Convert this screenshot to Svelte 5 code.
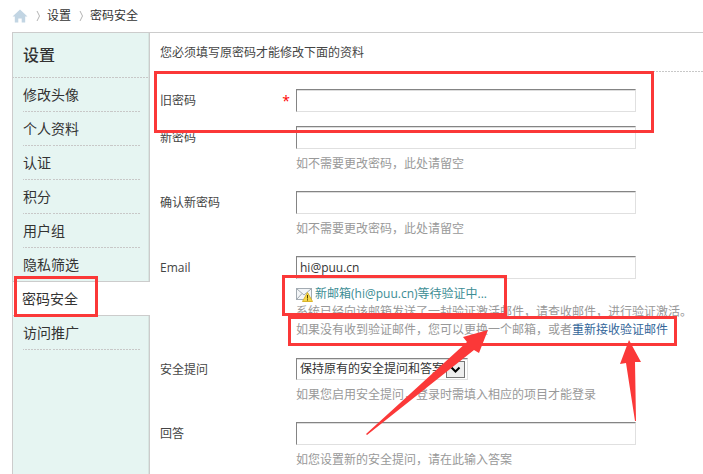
<script>
  const menu = [
    '修改头像',
    '个人资料',
    '认证',
    '积分',
    '用户组',
    '隐私筛选',
    '密码安全',
    '访问推广'
  ];

  let active = $state('密码安全');
  let email = $state('hi@puu.cn');
  let oldPassword = $state('');
  let newPassword = $state('');
  let newPassword2 = $state('');
  let answer = $state('');
  let question = $state('keep');
</script>

<div class="page">
  <nav class="crumbs">
    <a href="#home" aria-label="首页">
      <svg class="home" width="16" height="14" viewBox="0 0 16 14">
        <path d="M8 0.5 L15.5 7.5 H13.2 V13.5 H9.7 V9.5 H6.3 V13.5 H2.8 V7.5 H0.5 Z" fill="#c2d5e3" />
      </svg>
    </a>
    {@render chevron()}
    <a href="#settings">设置</a>
    {@render chevron()}
    <span>密码安全</span>
  </nav>

  <div class="body">
    <aside>
      <h2>设置</h2>
      <ul>
        {#each menu as item, i}
          <li class:active={item === active} class:before={menu[i + 1] === active}>
            <a href="#{item}" onclick={() => (active = item)}>{item}</a>
          </li>
        {/each}
      </ul>
    </aside>

    <main>
      <p class="intro">您必须填写原密码才能修改下面的资料</p>

      <form>
        <div class="row">
          <label for="old">旧密码 <span class="required">*</span></label>
          <div class="field">
            <input id="old" type="password" bind:value={oldPassword} />
          </div>
        </div>

        <div class="row">
          <label for="new">新密码</label>
          <div class="field">
            <input id="new" type="password" bind:value={newPassword} />
            <div class="hint">如不需要更改密码，此处请留空</div>
          </div>
        </div>

        <div class="row">
          <label for="new2">确认新密码</label>
          <div class="field">
            <input id="new2" type="password" bind:value={newPassword2} />
            <div class="hint">如不需要更改密码，此处请留空</div>
          </div>
        </div>

        <div class="row">
          <label for="email">Email</label>
          <div class="field">
            <input id="email" type="text" bind:value={email} />
            <div class="hint">
              <p class="pending">
                <svg width="17" height="15" viewBox="0 0 17 15">
                  <rect x="0.5" y="1.5" width="15" height="11" fill="#f4f6f8" stroke="#a3abb2" />
                  <path d="M1 2 L8 8 L15 2 M1 12 L6 6.5 M15 12 L10 6.5" fill="none" stroke="#a3abb2" />
                  <path d="M11.5 5.5 L16.5 14.5 H6.5 Z" fill="#f7d84a" stroke="#d9b52c" stroke-linejoin="round" />
                  <path d="M11.5 8 V11.5 M11.5 12.3 V13.5" stroke="#4a3b00" />
                </svg>
                新邮箱(hi@puu.cn)等待验证中...
              </p>
              <p>系统已经向该邮箱发送了一封验证激活邮件，请查收邮件，进行验证激活。</p>
              <p>如果没有收到验证邮件，您可以更换一个邮箱，或者<a href="#resend">重新接收验证邮件</a></p>
            </div>
          </div>
        </div>

        <div class="row">
          <label for="question">安全提问</label>
          <div class="field">
            <div class="select">
              <select id="question" bind:value={question}>
                <option value="keep">保持原有的安全提问和答案</option>
                <option value="none">无安全提问</option>
              </select>
              <span class="arrow">
                <svg width="11" height="8" viewBox="0 0 11 8">
                  <path d="M1.5 1.5 L5.5 5.5 L9.5 1.5" fill="none" stroke="#000" stroke-width="2" />
                </svg>
              </span>
            </div>
            <div class="hint">如果您启用安全提问，登录时需填入相应的项目才能登录</div>
          </div>
        </div>

        <div class="row">
          <label for="answer">回答</label>
          <div class="field">
            <input id="answer" type="text" bind:value={answer} />
            <div class="hint">如您设置新的安全提问，请在此输入答案</div>
          </div>
        </div>
      </form>
    </main>
  </div>

  <!-- red marks drawn over the page -->
  <svg class="marks" width="703" height="474" viewBox="0 0 703 474" aria-hidden="true">
    <g fill="none" stroke="#fb3838" stroke-width="3">
      <rect x="155.5" y="72.5" width="497" height="59" />
      <rect x="15.5" y="277.5" width="81" height="38" />
      <rect x="283.5" y="276.5" width="222" height="38" />
      <rect x="289.5" y="317.5" width="386" height="27" />
    </g>
    <g fill="#fb3838">
      <path d="M488 330 L463 337 L467 342 L366 434 L367 435 L474 350 L479 353 Z" />
      <path d="M629 340 L620 364 L626 363 L635 421 L636 421 L635 362 L641 362 Z" />
    </g>
  </svg>
</div>

{#snippet chevron()}
  <svg class="chevron" width="5" height="12" viewBox="0 0 5 12">
    <path d="M1 1 L3.5 6 L1 11" fill="none" stroke="#b4b4b4" />
  </svg>
{/snippet}

<style>
  :global(body) {
    margin: 0;
    background: #fff;
  }

  .page {
    position: relative;
    display: flex;
    flex-direction: column;
    min-height: 100vh;
    overflow: hidden;
    font: 12px/18px "Open Sans", "Noto Sans CJK SC", sans-serif;
    color: #444;
    --dashes: repeating-linear-gradient(90deg, #c8c8c8 0 2px, transparent 2px 3px) 1;
  }

  a {
    color: inherit;
    text-decoration: none;
  }

  p,
  h2,
  ul {
    margin: 0;
    padding: 0;
  }

  .crumbs {
    display: flex;
    align-items: center;
    height: 32px;
    padding-left: 12px;
    color: #333;
  }

  .crumbs svg {
    display: block;
  }

  .crumbs .chevron {
    margin: 0 6px 0 8px;
  }

  .body {
    flex: 1;
    display: flex;
    margin-left: 12px;
    border-top: 1px solid #ccc;
    border-left: 1px solid #ccc;
  }

  aside {
    flex: none;
    width: 137px;
    background: linear-gradient(to left, #ccc 1px, #d8e6e2 1px, #d8e6e2 2px, #e6f5f2 2px);
  }

  h2 {
    padding-left: 10px;
    border-bottom: 1px solid;
    border-image: var(--dashes);
    font-size: 16px;
    font-weight: 500;
    line-height: 44px;
    color: #333;
  }

  ul {
    list-style: none;
  }

  li {
    margin: 0 10px;
    border-bottom: 1px solid #ccc;
    border-image: var(--dashes);
    font-size: 14px;
    line-height: 33px;
    color: #333;
  }

  li a {
    display: block;
  }

  li.before {
    margin: 0;
    padding-left: 10px;
    border-image: none;
  }

  li.active {
    margin: 0;
    padding-left: 9px;
    background: #fff;
    border-image: none;
  }

  main {
    flex: 1;
    min-width: 0;
    padding-left: 10px;
  }

  .intro {
    height: 38px;
    border-bottom: 1px solid;
    border-image: var(--dashes);
    line-height: 40px;
  }

  form {
    padding-top: 17px;
  }

  .row {
    display: flex;
    margin-bottom: 14px;
  }

  label {
    flex: none;
    display: flex;
    justify-content: space-between;
    width: 130px;
    padding-right: 6px;
    line-height: 23px;
  }

  .required {
    color: #f00;
    font-size: 14px;
  }

  .field {
    flex: 1;
    min-width: 0;
  }

  input,
  select {
    display: block;
    box-sizing: border-box;
    margin: 0;
    border: 1px solid;
    border-color: #848484 #e0e0e0 #e0e0e0 #848484;
    border-radius: 0;
    outline: none;
    background: #fff;
    box-shadow: inset 0 1px 0 #ddd;
    font: inherit;
    color: #333;
  }

  input {
    width: 100%;
    max-width: 340px;
    height: 23px;
    padding: 0 3px;
  }

  .select {
    position: relative;
    width: 172px;
  }

  select {
    appearance: none;
    width: 100%;
    height: 22px;
    padding: 0 3px;
  }

  .arrow {
    position: absolute;
    top: 3px;
    right: 3px;
    display: flex;
    align-items: center;
    justify-content: center;
    box-sizing: border-box;
    width: 19px;
    height: 17px;
    border: 1px solid #777;
    background: #eee;
    pointer-events: none;
  }

  .hint {
    margin: 6px 0 4px;
    white-space: nowrap;
    color: #999;
  }

  .pending {
    display: flex;
    align-items: center;
    gap: 2px;
    color: #3c8d94;
  }

  .row:has(.pending) {
    margin-bottom: 15px;
  }

  .hint a {
    color: #336699;
  }

  .marks {
    position: absolute;
    top: 0;
    left: 0;
    pointer-events: none;
  }
</style>
